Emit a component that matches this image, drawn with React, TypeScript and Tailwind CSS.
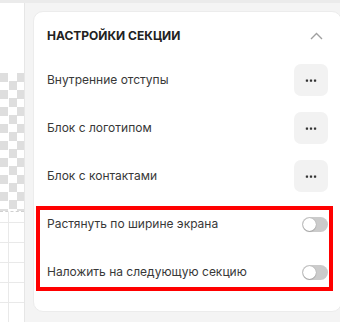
import React from "react";

function Dots() {
  return (
    <button className="w-[34px] h-[32px] rounded-[7px] bg-[#f2f2f2] flex items-center justify-center">
      <svg width="12" height="3" viewBox="0 0 12 3">
        <rect x="0.8" y="0.4" width="2.3" height="2.3" rx="0.4" fill="#333333" />
        <rect x="4.85" y="0.4" width="2.3" height="2.3" rx="0.4" fill="#333333" />
        <rect x="8.9" y="0.4" width="2.3" height="2.3" rx="0.4" fill="#333333" />
      </svg>
    </button>
  );
}

function Toggle() {
  return (
    <div className="w-[26px] h-[15px] rounded-full bg-[#cbcbcb] flex items-center px-[1px]">
      <div className="w-[13px] h-[13px] rounded-full bg-white shadow-[0_0_1px_rgba(0,0,0,0.35),0_1px_1px_rgba(0,0,0,0.15)]" />
    </div>
  );
}

function Row({ label }: { label: string }) {
  return (
    <div className="h-[48px] flex items-center justify-between">
      <span className="text-[12px] text-[#383838]">{label}</span>
      <Dots />
    </div>
  );
}

export default function App() {
  return (
    <div className="w-[340px] h-[322px] overflow-hidden bg-[#f4f4f4] flex flex-col font-['Inter',sans-serif]">
      <div className="h-[3px] shrink-0 bg-[#ebebeb]" />
      <div className="flex flex-1 min-h-0">
        <div className="w-[25px] shrink-0 bg-white border-r border-[#e6e6e6] flex flex-col">
          <div className="h-[70px] shrink-0" />
          <div className="h-[138px] shrink-0 bg-[conic-gradient(#ffffff_25%,#dedede_0_50%,#ffffff_0_75%,#dedede_0)] bg-[length:17px_17px]" />
          <div className="border-t border-dashed border-[#d0d0d0]" />
          <div className="flex-1 bg-[linear-gradient(#e9e9e9_1px,transparent_1px),linear-gradient(90deg,#e9e9e9_1px,transparent_1px)] bg-[length:20px_20px] bg-[position:8px_10px]" />
        </div>
        <div className="flex-1 pl-[8px] pt-[8px]">
          <div className="w-[309px] h-[301px] rounded-[10px] border border-[#ececec] bg-white px-[13px] pt-[12px]">
            <div className="h-[24px] flex items-center justify-between">
              <span className="text-[12px] font-bold text-[#222222]">НАСТРОЙКИ СЕКЦИИ</span>
              <svg width="13" height="8" viewBox="0 0 13 8" className="mr-[5px]">
                <path d="M1 7 L6.5 1.5 L12 7" fill="none" stroke="#a0a0a0" strokeWidth="1.4" />
              </svg>
            </div>
            <div className="mt-[8px]">
              <Row label="Внутренние отступы" />
              <Row label="Блок с логотипом" />
              <Row label="Блок с контактами" />
            </div>
            <div className="mt-[6px] -ml-[11px] -mr-[5px] border-4 border-[#ff0000] pl-[7px] pr-[1px] pb-[1px]">
              <div className="h-[28px] flex items-center justify-between">
                <span className="text-[12px] text-[#383838]">Растянуть по ширине экрана</span>
                <Toggle />
              </div>
              <div className="mt-[20px] h-[28px] flex items-center justify-between">
                <span className="text-[12px] text-[#383838]">Наложить на следующую секцию</span>
                <Toggle />
              </div>
            </div>
          </div>
        </div>
      </div>
    </div>
  );
}
